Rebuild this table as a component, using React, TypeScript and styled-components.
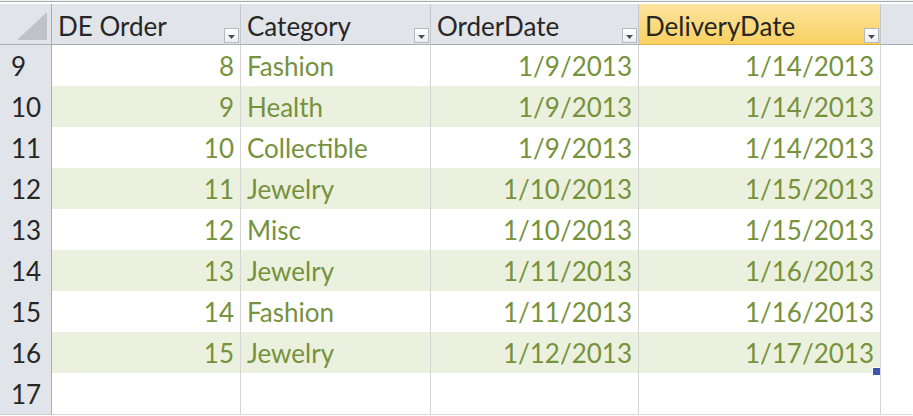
import React from "react";
import styled, { createGlobalStyle, css } from "styled-components";

const Global = createGlobalStyle`
  html, body { margin: 0; padding: 0; background: #ffffff; }
  body { font-family: Lato, "Open Sans", sans-serif; }
`;

const COLS = "52px 189px 190px 208px 242px 1fr";

const Sheet = styled.div`
  width: 913px;
  height: 416px;
  overflow: hidden;
  background: #ffffff;
  font-family: Lato, "Open Sans", sans-serif;
  font-size: 26px;
`;

const TopStrip = styled.div`
  height: 4px;
  box-sizing: border-box;
  background: #f3f3f3;
  border-bottom: 2px solid #ffffff;
  position: relative;
  &::after {
    content: "";
    position: absolute;
    left: 0;
    right: 0;
    top: 1px;
    height: 1px;
    background: #a7abb0;
  }
`;

const HeaderRow = styled.div`
  display: grid;
  grid-template-columns: ${COLS};
  height: 41px;
  background: #e1e4e9;
  border-bottom: 1px solid #a9afb8;
  box-sizing: border-box;
`;

const Corner = styled.div`
  position: relative;
  border-right: 1px solid #a9afb8;
  box-sizing: border-box;
`;

const CornerTri = styled.svg`
  position: absolute;
  right: 4px;
  bottom: 4px;
`;

const HeadCell = styled.div<{ $active?: boolean; $empty?: boolean }>`
  position: relative;
  box-sizing: border-box;
  border-right: 1px solid ${(p) => (p.$empty ? "transparent" : "#c4c9d0")};
  padding: 4px 0 0 6px;
  line-height: 36px;
  color: #262626;
  white-space: nowrap;
  ${(p) =>
    p.$active &&
    css`
      background: linear-gradient(#fde59f, #f9d060);
      border-bottom: 1px solid #e2b04a;
      margin-bottom: -1px;
    `}
`;

const FilterBtn = styled.div`
  position: absolute;
  right: 1px;
  bottom: 1px;
  width: 15px;
  height: 15px;
  box-sizing: border-box;
  border: 1px solid #b4b9c0;
  background: linear-gradient(#ffffff, #eceef2);
  display: flex;
  align-items: center;
  justify-content: center;
  padding-top: 2px;
`;

const Row = styled.div`
  display: grid;
  grid-template-columns: ${COLS};
  height: 41px;
`;

const RowHead = styled.div`
  background: #e1e4e9;
  border-right: 1px solid #a9afb8;
  border-bottom: 1px solid #c6cbd2;
  box-sizing: border-box;
  color: #262626;
  padding: 1px 0 0 11px;
  line-height: 40px;
`;

type Edge = "none" | "grid" | "table";

const edgeColor: Record<Edge, string> = {
  none: "transparent",
  grid: "#d9d9d9",
  table: "#9bb35f",
};

const Cell = styled.div<{
  $band?: boolean;
  $right?: boolean;
  $vline?: boolean;
  $edge?: Edge;
}>`
  position: relative;
  box-sizing: border-box;
  border-right: 1px solid ${(p) => (p.$vline === false ? "transparent" : "#d4d4d4")};
  border-bottom: 1px solid ${(p) => edgeColor[p.$edge ?? "none"]};
  background: ${(p) => (p.$band ? "#ebf1de" : "#ffffff")};
  color: #76923c;
  line-height: 40px;
  padding: 1px 6px 0;
  text-align: ${(p) => (p.$right ? "right" : "left")};
  white-space: nowrap;
`;

const FillHandle = styled.div`
  position: absolute;
  right: 0px;
  bottom: -2px;
  width: 8px;
  height: 8px;
  background: #3b55b0;
  border-left: 1px solid #ffffff;
  border-top: 1px solid #ffffff;
  box-sizing: border-box;
  z-index: 2;
`;

const Arrow = () => (
  <svg width="7" height="4" viewBox="0 0 7 4">
    <path d="M0 0 L7 0 L3.5 4 Z" fill="#4a4f57" />
  </svg>
);

const data: [number, string, string, string][] = [
  [8, "Fashion", "1/9/2013", "1/14/2013"],
  [9, "Health", "1/9/2013", "1/14/2013"],
  [10, "Collectible", "1/9/2013", "1/14/2013"],
  [11, "Jewelry", "1/10/2013", "1/15/2013"],
  [12, "Misc", "1/10/2013", "1/15/2013"],
  [13, "Jewelry", "1/11/2013", "1/16/2013"],
  [14, "Fashion", "1/11/2013", "1/16/2013"],
  [15, "Jewelry", "1/12/2013", "1/17/2013"],
];

const headers = ["DE Order", "Category", "OrderDate", "DeliveryDate"];

export default function App() {
  return (
    <Sheet>
      <Global />
      <TopStrip />
      <HeaderRow>
        <Corner>
          <CornerTri width="30" height="28" viewBox="0 0 30 28">
            <path d="M30 0 L30 28 L0 28 Z" fill="#bfc3c9" />
          </CornerTri>
        </Corner>
        {headers.map((h, i) => (
          <HeadCell key={h} $active={i === 3}>
            {h}
            <FilterBtn>
              <Arrow />
            </FilterBtn>
          </HeadCell>
        ))}
        <HeadCell $empty />
      </HeaderRow>
      {data.map((r, i) => {
        const band = i % 2 === 1;
        const last = i === data.length - 1;
        const edge: Edge = last ? "table" : "none";
        return (
          <Row key={i}>
            <RowHead>{9 + i}</RowHead>
            <Cell $band={band} $edge={edge} $right>{r[0]}</Cell>
            <Cell $band={band} $edge={edge}>{r[1]}</Cell>
            <Cell $band={band} $edge={edge} $right>{r[2]}</Cell>
            <Cell $band={band} $edge={edge} $right>
              {r[3]}
              {last && <FillHandle />}
            </Cell>
            <Cell $vline={false} $edge={last ? "grid" : "none"} />
          </Row>
        );
      })}
      <Row>
        <RowHead>17</RowHead>
        <Cell $edge="grid" />
        <Cell $edge="grid" />
        <Cell $edge="grid" />
        <Cell $edge="grid" />
        <Cell $vline={false} $edge="grid" />
      </Row>
    </Sheet>
  );
}
